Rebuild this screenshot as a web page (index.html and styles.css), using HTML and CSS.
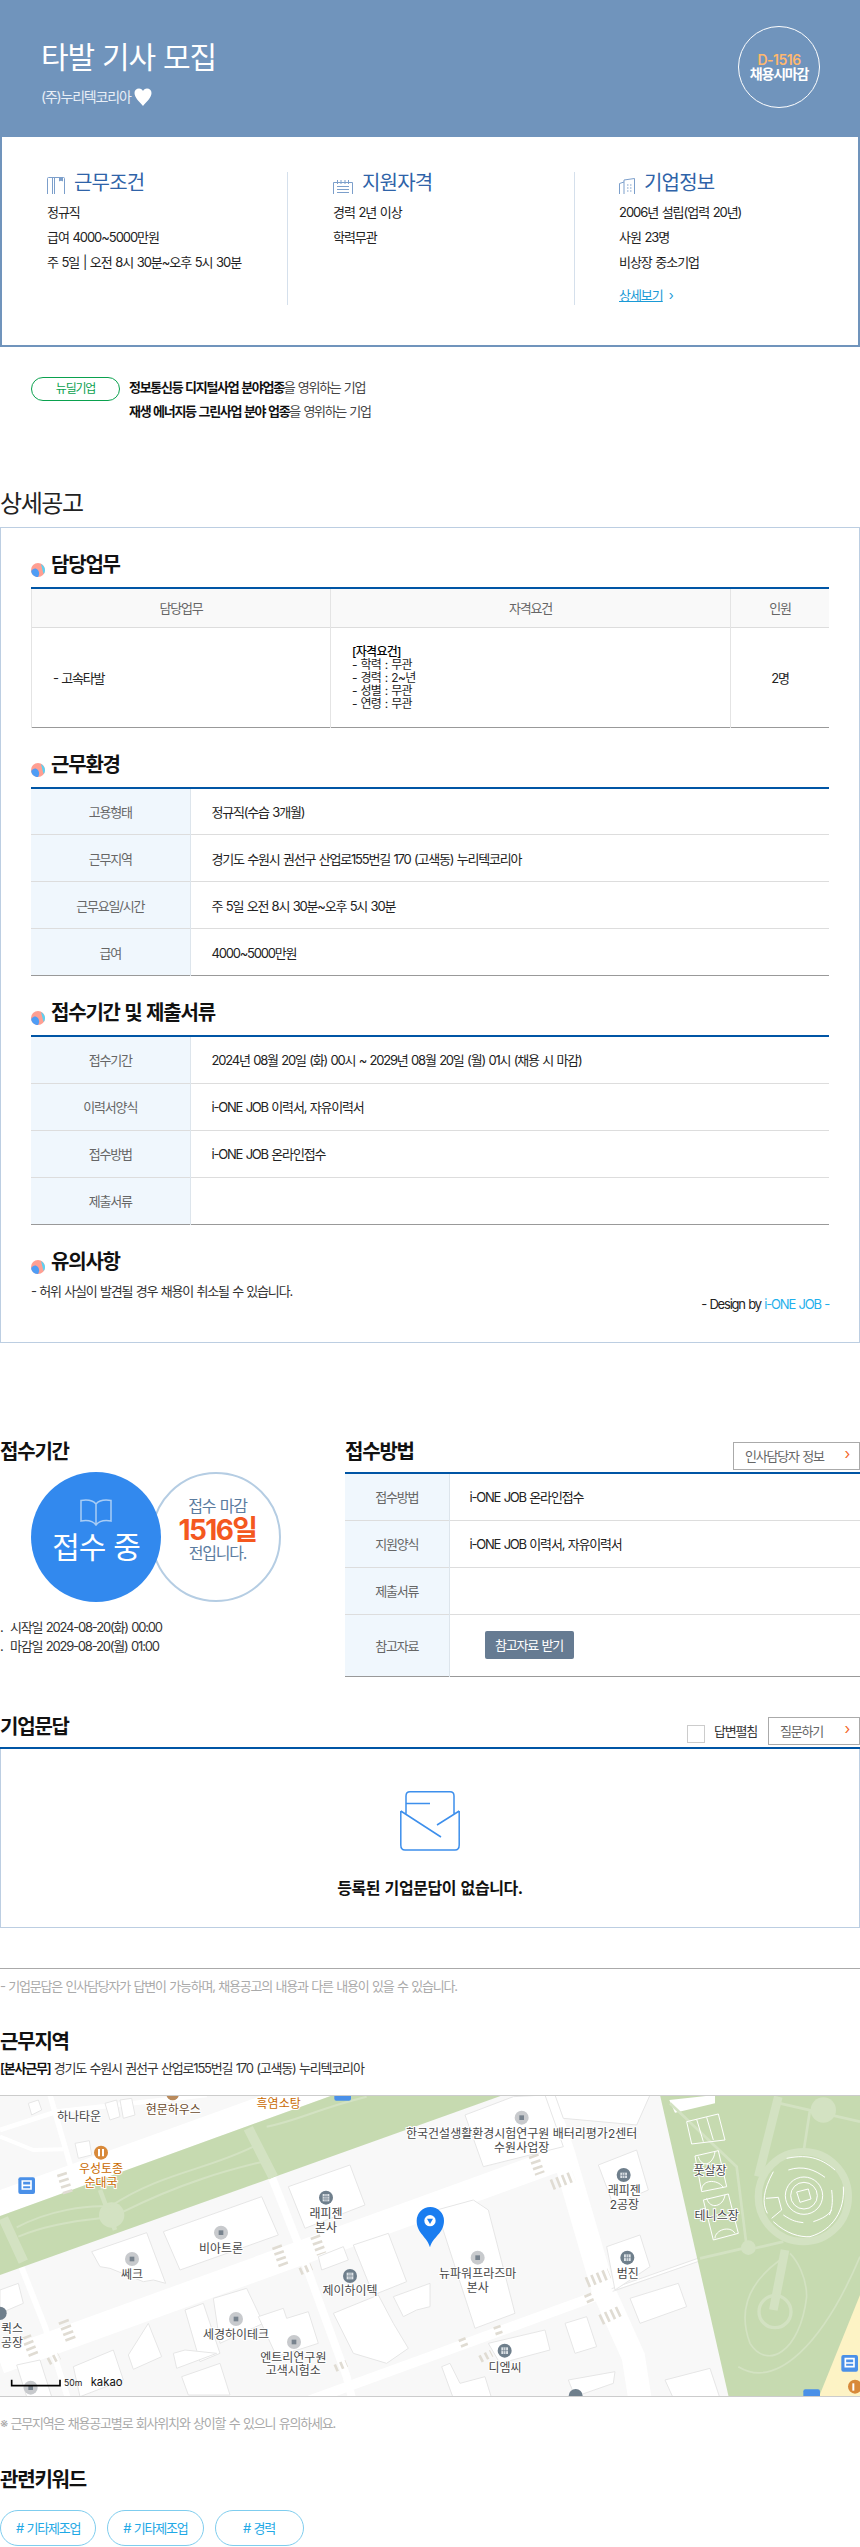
FILE: index.html
```html
<!DOCTYPE html>
<html lang="ko">
<head>
    <meta charset="UTF-8">
    <title>타발 기사 모집</title>
    <link rel="stylesheet" href="styles.css">
</head>
<body>
<svg class="defs" width="0" height="0">
    <symbol id="ball" viewBox="0 0 14 14">
        <circle cx="7" cy="7" r="7" fill="#ff9f92"/>
        <path d="M0.2 8 C2 5 5 4.5 7 7 C8.5 9 8.5 12 7 14 C3 14 0.6 11.5 0.2 8Z" fill="#4f9df5"/>
        <path d="M10 1 C12.5 2.5 14 5 14 7 C14 8.5 13.5 10 12.6 11 C11.5 8 11 4 10 1Z" fill="#58d3f5"/>
    </symbol>
</svg>

<div class="job-top">
    <div>
        <h1 class="job-title">타발 기사 모집</h1>
        <div class="job-company">(주)누리텍코리아
            <svg class="heart" width="18" height="18" viewBox="0 0 18 18"><path d="M9 18 C6 14 0.5 10 0.5 5 C0.5 2 2.5 0.5 5 0.5 C7 0.5 8.3 1.5 9 3 C9.7 1.5 11 0.5 13 0.5 C15.5 0.5 17.5 2 17.5 5 C17.5 10 12 14 9 18Z" fill="#fff"/></svg>
        </div>
    </div>
    <div class="dday">
        <span class="dday-num">D-1516</span>
        <span class="dday-txt">채용시마감</span>
    </div>
</div>

<div class="summary">
    <div class="summary-col">
        <h2>
            <svg width="18" height="17" viewBox="0 0 18 17" class="sum-icon"><path d="M0.5 17V1.5Q0.5 0.5 1.5 0.5H16.5Q17.5 0.5 17.5 1.5V17M5.5 0.5V17M7.5 0.5V17"/><path d="M12.5 0.5V4L14 3L15.5 4V0.5" class="fill"/></svg>
            근무조건
        </h2>
        <p>정규직</p>
        <p>급여 4000~5000만원</p>
        <p>주 5일 | 오전 8시 30분~오후 5시 30분</p>
    </div>
    <div class="summary-col">
        <h2>
            <svg width="20" height="14" viewBox="0 0 20 14" class="sum-icon"><path d="M0.5 14V2.5H19.5V14M4.5 0V4M8 0V4M12 0V4M15.5 0V4M4 6.5H16M4 9.5H16M4 12.5H16"/></svg>
            지원자격
        </h2>
        <p>경력 2년 이상</p>
        <p>학력무관</p>
    </div>
    <div class="summary-col">
        <h2>
            <svg width="16" height="16" viewBox="0 0 16 16" class="sum-icon"><path d="M0.5 16V5.5L5 4V16M5 4V2L15.5 0.5V16M8 7H9.5M11 7H12.5M8 10H9.5M11 10H12.5M8 13H9.5M11 13H12.5"/></svg>
            기업정보
        </h2>
        <p>2006년 설립(업력 20년)</p>
        <p>사원 23명</p>
        <p>비상장 중소기업</p>
        <div class="more"><a href="#">상세보기</a><span>›</span></div>
    </div>
</div>

<div class="newdeal">
    <span class="newdeal-tag">뉴딜기업</span>
    <div>
        <p><b>정보통신등 디지털사업 분야업종</b>을 영위하는 기업</p>
        <p><b>재생 에너지등 그린사업 분야 업종</b>을 영위하는 기업</p>
    </div>
</div>

<h2 class="detail-title">상세공고</h2>
<div class="detail-box">
    <h3 class="sec-title"><svg class="ball"><use href="#ball"/></svg>담당업무</h3>
    <table class="tbl tbl-duty">
        <colgroup><col class="c1"><col class="c2"><col></colgroup>
        <tr class="head"><th>담당업무</th><th>자격요건</th><th>인원</th></tr>
        <tr class="body">
            <td class="left">- 고속타발</td>
            <td class="left qual"><b>[자격요건]</b><br>- 학력 : 무관<br>- 경력 : 2~년<br>- 성별 : 무관<br>- 연령 : 무관</td>
            <td>2명</td>
        </tr>
    </table>

    <h3 class="sec-title"><svg class="ball"><use href="#ball"/></svg>근무환경</h3>
    <table class="tbl tbl-info">
        <tr><th>고용형태</th><td>정규직(수습 3개월)</td></tr>
        <tr><th>근무지역</th><td>경기도 수원시 권선구 산업로155번길 170 (고색동) 누리텍코리아</td></tr>
        <tr><th>근무요일/시간</th><td>주 5일 오전 8시 30분~오후 5시 30분</td></tr>
        <tr><th>급여</th><td>4000~5000만원</td></tr>
    </table>

    <h3 class="sec-title"><svg class="ball"><use href="#ball"/></svg>접수기간 및 제출서류</h3>
    <table class="tbl tbl-info">
        <tr><th>접수기간</th><td>2024년 08월 20일 (화) 00시 ~ 2029년 08월 20일 (월) 01시 (채용 시 마감)</td></tr>
        <tr><th>이력서양식</th><td>i-ONE JOB 이력서, 자유이력서</td></tr>
        <tr><th>접수방법</th><td>i-ONE JOB 온라인접수</td></tr>
        <tr><th>제출서류</th><td></td></tr>
    </table>

    <h3 class="sec-title"><svg class="ball"><use href="#ball"/></svg>유의사항</h3>
    <p class="notice">- 허위 사실이 발견될 경우 채용이 취소될 수 있습니다.</p>
    <p class="design">- Design by <span>i-ONE JOB -</span></p>
</div>

<div class="apply">
    <div>
        <div class="row-head"><h3 class="plain-title">접수기간</h3></div>
        <div class="circles">
            <div class="circle-on">
                <svg width="32" height="27" viewBox="0 0 32 27" class="book"><path d="M16 5 C13 1.5 7 0.5 1 1.5 V22 C7 21 13 22 16 26 C19 22 25 21 31 22 V1.5 C25 0.5 19 1.5 16 5Z M16 5 V26"/></svg>
                <span>접수 중</span>
            </div>
            <div class="circle-off">
                <span>접수 마감</span>
                <strong>1516일</strong>
                <span>전입니다.</span>
            </div>
        </div>
        <ul class="dates">
            <li>시작일 2024-08-20(화) 00:00</li>
            <li>마감일 2029-08-20(월) 01:00</li>
        </ul>
    </div>
    <div>
        <div class="row-head">
            <h3 class="plain-title">접수방법</h3>
            <a class="line-btn hr-btn" href="#">인사담당자 정보<span>›</span></a>
        </div>
        <table class="tbl tbl-apply">
            <tr><th>접수방법</th><td>i-ONE JOB 온라인접수</td></tr>
            <tr><th>지원양식</th><td>i-ONE JOB 이력서, 자유이력서</td></tr>
            <tr><th>제출서류</th><td></td></tr>
            <tr class="tall"><th>참고자료</th><td><a class="file-btn" href="#">참고자료 받기</a></td></tr>
        </table>
    </div>
</div>

<div class="qna-head">
    <h3 class="plain-title">기업문답</h3>
    <div class="qna-tools">
        <label class="check"><i></i>답변펼침</label>
        <a class="line-btn ask-btn" href="#">질문하기<span>›</span></a>
    </div>
</div>
<div class="qna-box">
    <svg width="60" height="60" viewBox="0 0 60 60" class="mail"><path d="M0.8 20 V54 Q0.8 59 5 59 H55 Q59.2 59 59.2 54 V20 M0.8 20 L41 46 M59.2 20 L37 34 M6 24 V5 Q6 0.8 10 0.8 H50 Q54 0.8 54 5 V24 M6 12.5 H30"/></svg>
    <p>등록된 기업문답이 없습니다.</p>
</div>
<p class="qna-note">- 기업문답은 인사담당자가 답변이 가능하며, 채용공고의 내용과 다른 내용이 있을 수 있습니다.</p>

<h3 class="plain-title area-title">근무지역</h3>
<p class="address"><b>[본사근무]</b> 경기도 수원시 권선구 산업로155번길 170 (고색동) 누리텍코리아</p>

<div class="map">
    <svg width="860" height="300" viewBox="0 2096 860 300">
        <rect class="m-base" x="0" y="2090" width="860" height="320"/>
        <g transform="translate(0 2090) scale(0.33333)">
            <!-- roads -->
            <path class="m-white" d="M0 300 L790 15 L1000 15 L0 378Z"/>
            <path class="m-road" stroke-width="72" d="M0 816 L1671 210"/>
            <path class="m-road" stroke-width="70" d="M1630 15 L1690 190 L1810 600 L1900 800 L1925 960"/>
            <path class="m-road" stroke-width="30" d="M850 960 L1290 800 L1810 610"/>
            <path class="m-road" stroke-width="24" d="M815 260 L890 450 L1040 860 L1065 960"/>
            <path class="m-road" stroke-width="18" d="M60 520 L135 710 L215 960"/>
            <path class="m-road" stroke-width="16" d="M150 15 L215 240"/>
            <path class="m-road" stroke-width="12" d="M0 140 L100 180 L190 178"/>
            <path class="m-road" stroke-width="14" d="M0 120 L170 65 L620 15"/>
            <path class="m-road" stroke-width="8" d="M1830 600 L2110 505"/>
            <path class="m-edge" d="M1835 596 L2108 500 M1838 604 L2110 509"/>
            <!-- park band -->
            <path class="m-green" d="M0 378 L1000 15 L1510 15 L0 555Z"/>
            <path class="m-light" stroke-width="30" d="M745 115 L820 262 M10 385 L70 515"/>
            <path class="m-light" stroke-width="14" d="M300 300 L345 420"/>
            <circle class="m-lightfill" cx="335" cy="375" r="38"/>
            <path class="m-light" stroke-width="6" d="M50 412 C150 360 260 345 330 350 C480 250 620 240 760 170 M55 440 C150 400 250 390 300 385 M370 365 C540 280 680 240 810 210 M800 110 C900 90 940 60 1100 20"/>
            <!-- buildings -->
            <g class="m-bld">
                <path d="M865 290 L1050 225 L1095 345 L915 415Z"/>
                <path d="M490 425 L785 320 L835 435 L540 540Z"/>
                <path d="M275 485 L440 428 L497 580 L460 570 L430 575 L330 535 L300 530Z"/>
                <path d="M955 500 L1030 470 L1045 510 L965 540Z"/>
                <path d="M1060 465 L1165 430 L1220 575 L1120 615Z"/>
                <path d="M1000 670 L1135 615 L1180 700 L1225 775 L1160 820 L1060 790Z"/>
                <path d="M1180 620 L1290 580 L1290 650 L1250 660 L1210 680Z"/>
                <path d="M640 625 L740 595 L790 700 L660 760Z"/>
                <path d="M555 660 L610 640 L660 790 L600 815Z"/>
                <path d="M385 795 L445 700 L485 800 L400 838Z"/>
                <path d="M775 680 L850 655 L860 685 L925 665 L955 760 L830 800Z"/>
                <path d="M220 830 L340 780 L370 870 L240 920Z"/>
                <path d="M520 790 L555 780 L650 790 L530 835Z"/>
                <path d="M50 825 L120 810 L155 920 L80 920Z"/>
                <path d="M545 860 L660 820 L690 915 L565 915Z"/>
                <path d="M0 600 L55 580 L70 640 L0 670Z"/>
                <path d="M225 160 L268 152 L275 195 L235 205Z"/>
                <path d="M315 40 L350 30 L360 80 L330 90Z"/>
                <path d="M360 30 L395 25 L405 75 L370 85Z"/>
                <path d="M85 40 L115 30 L125 60 L95 75Z"/>
            </g>
        </g>
        <g transform="translate(430 2090) scale(0.33333)">
            <path class="m-green" d="M690 15 L905 960 L1300 960 L1300 15Z"/>
            <path class="m-white" d="M718 30 L855 15 L855 40 L735 68Z"/>
            <path class="m-yellow" d="M1300 590 L1165 925 L1300 925Z"/>
            <g class="m-bld">
                <path d="M505 225 L620 180 L655 300 L550 345Z"/>
                <path d="M530 470 L630 435 L660 530 L555 600Z"/>
                <path d="M600 625 L745 580 L770 650 L630 700Z"/>
                <path d="M105 75 L250 20 L345 15 L400 170 L160 230Z"/>
                <path d="M375 15 L660 15 L620 105 L400 85Z"/>
                <path d="M20 360 L130 330 L175 360 L255 670 L135 715Z"/>
                <path d="M405 700 L470 680 L500 770 L435 790Z"/>
                <path d="M175 760 L345 720 L360 780 L210 820Z"/>
                <path d="M705 870 L840 835 L870 925 L730 925Z"/>
                <path d="M35 830 L60 820 L90 880 L165 860 L185 925 L70 925Z"/>
                <path d="M415 870 L555 845 L550 880 L435 920Z"/>
            </g>
            <!-- park paths -->
            <path class="m-light" stroke-width="26" d="M1045 20 L985 260 M1065 480 L1030 660"/>
            <path class="m-light" stroke-width="8" d="M1140 60 L1120 190 M720 40 L920 230 L950 470 M950 480 L1060 455 M1050 40 L1290 95 M810 505 L940 475"/>
            <path class="m-light" stroke-width="5" d="M1050 510 C940 590 930 680 960 760 C1010 840 1110 790 1130 620 C1130 560 1100 510 1080 490 M925 830 C1040 900 1180 760 1290 500"/>
            <circle class="m-ring" cx="1120" cy="320" r="135" stroke-width="22"/>
            <circle class="m-ring" cx="1035" cy="665" r="48" stroke-width="10"/>
            <circle class="m-lightfill" cx="1180" cy="60" r="38"/>
            <circle class="m-lightfill" cx="955" cy="473" r="22"/>
            <g class="m-line">
                <path d="M770 95 L865 72 L885 150 L785 162Z M800 88 L820 155 M830 82 L850 150"/>
                <path d="M795 198 L865 182 L890 290 L815 305Z M805 200 C815 235 850 225 855 185 M815 300 C815 270 860 265 880 292"/>
                <path d="M820 330 L895 312 L925 430 L850 450Z M830 325 C840 360 880 350 885 315 M855 445 C855 420 900 405 915 430"/>
                <circle cx="1122" cy="317" r="56"/>
                <circle cx="1122" cy="317" r="40"/>
                <path d="M1100 306 L1135 297 L1143 327 L1110 337Z"/>
                <path d="M1070 205 C1140 190 1180 210 1215 240 M1075 240 C1120 225 1155 240 1185 262 M1030 245 C1000 300 995 340 1012 370 M1205 300 C1210 340 1205 360 1198 375 M1240 290 C1245 360 1210 420 1140 440 C1110 442 1070 432 1030 395 M1008 325 L1045 322 L1055 360 L1025 385 M1060 375 C1090 395 1100 395 1120 398 M1150 395 C1180 385 1195 375 1205 360"/>
            </g>
        </g>
        <g transform="translate(0 2090) scale(0.33333)">
            <!-- crosswalks -->
            <g class="m-cross">
                <path stroke-width="30" d="M185 250 L205 312"/>
                <path stroke-width="32" d="M190 692 L215 756"/>
                <path stroke-width="30" d="M78 738 L102 798"/>
                <path stroke-width="30" d="M830 468 L852 530"/>
                <path stroke-width="30" d="M945 438 L965 492"/>
                <path stroke-width="22" d="M900 545 L935 530"/>
                <path stroke-width="22" d="M145 815 L178 798"/>
                <path stroke-width="22" d="M1005 835 L1040 820"/>
                <path stroke-width="30" d="M1600 195 L1620 252"/>
                <path stroke-width="32" d="M1655 285 L1722 258"/>
                <path stroke-width="32" d="M1760 578 L1828 550"/>
                <path stroke-width="22" d="M1762 612 L1775 642"/>
                <path stroke-width="32" d="M1802 690 L1866 660"/>
                <path stroke-width="22" d="M1490 708 L1500 738"/>
                <path stroke-width="22" d="M1385 745 L1398 778"/>
                <path stroke-width="22" d="M1440 808 L1475 790"/>
            </g>
            <!-- bus -->
            <g class="m-bus">
                <rect x="55" y="262" width="50" height="50" rx="6"/>
                <rect x="1003" y="-18" width="50" height="50" rx="6"/>
                <rect x="2524" y="795" width="50" height="50" rx="6"/>
                <rect x="2410" y="898" width="50" height="50" rx="6"/>
            </g>
            <g class="m-busglyph">
                <path d="M67 273 H93 V297 H67Z M67 286 H93"/>
                <path d="M2536 806 H2562 V830 H2536Z M2536 819 H2562"/>
            </g>
            <!-- poi -->
            <g class="m-dot">
                <circle cx="663" cy="428" r="21"/><circle cx="396" cy="507" r="21"/>
                <circle cx="708" cy="687" r="21"/><circle cx="882" cy="756" r="21"/>
                <circle cx="92" cy="893" r="21"/><circle cx="1565" cy="83" r="21"/>
                <circle cx="1433" cy="503" r="21"/>
            </g>
            <g class="m-dotin">
                <rect x="656" y="421" width="14" height="14"/><rect x="389" y="500" width="14" height="14"/>
                <rect x="701" y="680" width="14" height="14"/><rect x="875" y="749" width="14" height="14"/>
                <rect x="85" y="886" width="14" height="14"/><rect x="1558" y="76" width="14" height="14"/>
                <rect x="1426" y="496" width="14" height="14"/>
            </g>
            <g class="m-dark">
                <circle cx="978" cy="323" r="21"/><circle cx="1050" cy="558" r="21"/>
                <circle cx="1871" cy="255" r="21"/><circle cx="1882" cy="503" r="21"/>
                <circle cx="1514" cy="782" r="21"/><circle cx="1727" cy="918" r="21"/>
                <circle cx="0" cy="670" r="20"/>
            </g>
            <g class="m-darkin">
                <rect x="968" y="312" width="20" height="22"/><rect x="1040" y="548" width="20" height="20"/>
                <rect x="1861" y="248" width="20" height="16"/><rect x="1872" y="493" width="20" height="20"/>
                <rect x="1504" y="772" width="20" height="20"/>
            </g>
            <path class="m-grid" d="M975 312 V334 M981 312 V334 M968 320 H988 M968 327 H988 M1047 548 V568 M1053 548 V568 M1040 558 H1060 M1868 248 V264 M1874 248 V264 M1861 256 H1881 M1879 493 V513 M1885 493 V513 M1872 503 H1892 M1511 772 V792 M1517 772 V792 M1504 782 H1524"/>
            <circle class="m-food" cx="303" cy="188" r="21"/>
            <path class="m-fork" d="M297 177 V199 M309 177 V199"/>
            <circle class="m-food" cx="2565" cy="890" r="21"/>
            <path class="m-fork" d="M2560 880 V902"/>
            <circle class="m-brown" cx="518" cy="12" r="19"/>
            <!-- labels -->
            <g class="m-label">
                <text x="237" y="93">하나타운</text>
                <text x="978" y="385">래피젠</text><text x="978" y="425">본사</text>
                <text x="663" y="490">비아트론</text>
                <text x="396" y="566">쎄크</text>
                <text x="1050" y="615">제이하이텍</text>
                <text x="708" y="748">세경하이테크</text>
                <text x="880" y="816">엔트리연구원</text><text x="880" y="856">고색시험소</text>
                <text x="36" y="728">퀵스</text><text x="36" y="770">공장</text>
                <text x="1565" y="145">한국건설생활환경시험연구원 배터리평가2센터</text>
                <text x="1565" y="185">수원사업장</text>
                <text x="1433" y="565">뉴파워프라즈마</text><text x="1433" y="605">본사</text>
                <text x="1873" y="315">래피젠</text><text x="1873" y="356">2공장</text>
                <text x="1883" y="565">범진</text>
                <text x="1515" y="845">디엠씨</text>
                <text x="2130" y="256">풋살장</text>
                <text x="2150" y="391">테니스장</text>
            </g>
            <text class="m-label m-brownlabel" x="520" y="73">현문하우스</text>
            <g class="m-label m-orange">
                <text x="836" y="55">흑염소탕</text>
                <text x="303" y="250">우성토종</text><text x="303" y="290">순대국</text>
            </g>
            <!-- scale -->
            <path class="m-scale" d="M35 869 V887 H180 V869"/>
            <text class="m-50" x="192" y="889">50m</text>
            <text class="m-kakao" x="272" y="889">kakao</text>
            <!-- pin -->
            <path class="m-pin" d="M1290 472 C1282 440 1250 430 1250 392 A41 41 0 1 1 1332 392 C1332 430 1298 440 1290 472Z"/>
            <circle cx="1290" cy="392" r="17" fill="#fff"/>
            <path class="m-pin" d="M1281 386 H1299 L1290 402Z"/>
        </g>
    </svg>
</div>
<p class="map-note">※ 근무지역은 채용공고별로 회사위치와 상이할 수 있으니 유의하세요.</p>

<h3 class="plain-title keyword-title">관련키워드</h3>
<div class="keywords">
    <a href="#"># 기타제조업</a>
    <a href="#"># 기타제조업</a>
    <a href="#"># 경력</a>
</div>
</body>
</html>
```

FILE: styles.css
```css
* {
    margin: 0;
    padding: 0;
    box-sizing: border-box;
}
html, body {
    background: #fff;
}
body {
    width: 860px;
    font-family: Inter, "Noto Sans CJK KR", sans-serif;
    font-size: 13px;
    color: #222;
    letter-spacing: -1.2px;
    word-spacing: 1px;
    padding-bottom: 1px;
}
a {
    text-decoration: none;
    color: inherit;
}
.defs {
    position: absolute;
}

/* top */
.job-top {
    height: 137px;
    background: #7094bc;
    padding: 26px 40px 0 41px;
    display: flex;
    justify-content: space-between;
    align-items: flex-start;
    color: #fff;
}
.job-title {
    font-size: 30px;
    font-weight: 400;
    line-height: 40px;
    margin-top: 11px;
}
.job-company {
    margin-top: 11px;
    font-size: 14px;
    line-height: 18px;
    color: #e8eef6;
    display: flex;
    align-items: center;
    gap: 3px;
}
.dday {
    width: 82px;
    height: 82px;
    border: 1px solid #fff;
    border-radius: 50%;
    display: flex;
    flex-direction: column;
    align-items: center;
    justify-content: center;
    font-size: 14px;
    font-weight: 600;
    line-height: 14px;
}
.dday-num {
    color: #ffb86e;
    letter-spacing: -0.5px;
}

/* summary */
.summary {
    height: 210px;
    padding-top: 35px;
    border: 2px solid #7094bc;
    border-top: 0;
    display: grid;
    grid-template-columns: 286px 287px 1fr;
    align-items: start;
}
.summary-col {
    height: 133px;
    padding-left: 45px;
    border-right: 1px solid #d5e0ec;
    letter-spacing: -1.05px;
}
.summary-col:last-child {
    border-right: 0;
    padding-left: 44px;
}
.summary-col h2 {
    font-size: 20px;
    font-weight: 400;
    line-height: 22px;
    color: #2f63a8;
    display: flex;
    align-items: flex-end;
    gap: 9px;
    margin-bottom: 6px;
    letter-spacing: -0.8px;
}
.sum-icon {
    fill: none;
    stroke: #7c9fcb;
    stroke-width: 1;
}
.sum-icon .fill {
    fill: #7c9fcb;
}
.summary-col p {
    line-height: 25px;
}
.more {
    margin-top: 12px;
    line-height: 16px;
    color: #1a9ad6;
    display: flex;
    gap: 6px;
}
.more a {
    text-decoration: underline;
}

/* newdeal */
.newdeal {
    margin-top: 28px;
    padding-left: 31px;
    display: flex;
    gap: 9px;
    align-items: flex-start;
}
.newdeal-tag {
    width: 89px;
    height: 24px;
    margin-top: 2px;
    border: 1px solid #0aa14e;
    border-radius: 12px;
    color: #0aa14e;
    font-size: 12px;
    line-height: 22px;
    text-align: center;
}
.newdeal p {
    line-height: 24px;
    color: #444;
    letter-spacing: -1.3px;
}
.newdeal b {
    color: #111;
    font-weight: 700;
}

/* detail */
.detail-title {
    margin-top: 66px;
    margin-bottom: 8px;
    font-size: 24px;
    font-weight: 400;
    line-height: 30px;
    color: #222;
    letter-spacing: -1.4px;
}
.detail-box {
    height: 816px;
    border: 1px solid #bccee2;
    padding: 23px 30px 0;
}
.sec-title {
    display: flex;
    gap: 6px;
    font-size: 20px;
    font-weight: 700;
    line-height: 28px;
    color: #111;
    margin-top: 23px;
    margin-bottom: 8px;
    letter-spacing: -1.2px;
}
.sec-title:first-child {
    margin-top: 0;
}
.ball {
    width: 14px;
    height: 14px;
    align-self: flex-end;
    margin-bottom: 2px;
}

/* tables */
.tbl {
    width: 100%;
    table-layout: fixed;
    border-collapse: collapse;
    border-top: 2px solid #0055a5;
    border-bottom: 1px solid #999;
}
.tbl th {
    font-weight: 400;
    color: #666;
    text-align: center;
}
.tbl td {
    color: #222;
}
.tbl tr {
    height: 47px;
    border-bottom: 1px solid #ddd;
}
.tbl tr:last-child {
    border-bottom: 0;
}
.tbl-duty .c1 {
    width: 299px;
}
.tbl-duty .c2 {
    width: 400px;
}
.tbl-duty th {
    background: #f9f9f9;
    border-left: 1px solid #e4e4e4;
}
.tbl-duty td {
    text-align: center;
    border-left: 1px solid #e4e4e4;
}
.tbl-duty tr.head {
    height: 39px;
}
.tbl-duty tr.body {
    height: 100px;
}
.tbl-duty td.left {
    text-align: left;
    padding-left: 21px;
}
.tbl-duty td.qual {
    font-size: 12px;
    line-height: 13px;
    letter-spacing: -0.7px;
}
.tbl-duty td.qual b {
    font-weight: 500;
    color: #000;
}
.tbl-info th {
    width: 159px;
    background: #f0f7fd;
    border-right: 1px solid #dde5ec;
}
.tbl-info td {
    padding-left: 21px;
}
.notice {
    line-height: 14px;
    color: #333;
}
.design {
    line-height: 12px;
    text-align: right;
    color: #222;
}
.design span {
    color: #1fb0ec;
}

/* apply */
.apply {
    margin-top: 95px;
    display: grid;
    grid-template-columns: 345px 515px;
}
.row-head {
    height: 34px;
    display: flex;
    justify-content: space-between;
    align-items: flex-start;
}
.plain-title {
    font-size: 20px;
    font-weight: 700;
    line-height: 28px;
    color: #111;
    letter-spacing: -1.2px;
}
.line-btn {
    height: 28px;
    border: 1px solid #aaa;
    color: #666;
    line-height: 26px;
    display: flex;
    justify-content: space-between;
    padding: 0 10px 0 11px;
}
.line-btn span {
    color: #f4682a;
    font-size: 15px;
    line-height: 22px;
}
.hr-btn {
    width: 127px;
    margin-top: 4px;
}
.circles {
    display: flex;
    padding-left: 31px;
}
.circle-on {
    position: relative;
    z-index: 1;
    width: 130px;
    height: 130px;
    border-radius: 50%;
    background: #3289ee;
    color: #fff;
    display: flex;
    flex-direction: column;
    align-items: center;
    padding-top: 27px;
    font-size: 30px;
    line-height: 36px;
}
.book {
    fill: none;
    stroke: #a9cdf5;
    stroke-width: 1.5;
    margin-bottom: 3px;
}
.circle-off {
    width: 130px;
    height: 130px;
    margin-left: -10px;
    padding: 0 0 14px 3px;
    border: 2px solid #b5cde3;
    border-radius: 50%;
    display: flex;
    flex-direction: column;
    align-items: center;
    justify-content: center;
    color: #5b7c9f;
    font-size: 16px;
    line-height: 23px;
}
.circle-off strong {
    font-size: 28px;
    line-height: 24px;
    font-weight: 700;
    color: #f4581f;
    letter-spacing: -1.6px;
}
.dates {
    list-style: none;
    margin-top: 16px;
    padding-left: 10px;
    line-height: 19px;
    color: #333;
    position: relative;
}
.dates li::before {
    content: ".";
    position: absolute;
    left: 0;
}
.tbl-apply th {
    width: 104px;
    background: #f0f7fd;
    border-right: 1px solid #dde5ec;
}
.tbl-apply td {
    padding-left: 20px;
}
.tbl-apply tr.tall {
    height: 62px;
}
.file-btn {
    display: block;
    width: 89px;
    height: 28px;
    margin-left: 15px;
    background: #667b92;
    border-radius: 2px;
    color: #fff;
    line-height: 28px;
    text-align: center;
}

/* qna */
.qna-head {
    margin-top: 36px;
    height: 36px;
    display: flex;
    justify-content: space-between;
    border-bottom: 2px solid #0055a5;
}
.qna-tools {
    display: flex;
    margin-top: 4px;
    gap: 11px;
}
.check {
    display: flex;
    align-items: center;
    gap: 9px;
    height: 28px;
    color: #333;
}
.check i {
    width: 18px;
    height: 18px;
    margin-top: 6px;
    border: 1px solid #ccc;
}
.ask-btn {
    width: 92px;
}
.qna-box {
    height: 179px;
    border: 1px solid #bccee2;
    border-top: 0;
    padding-top: 42px;
    text-align: center;
}
.mail {
    display: block;
    margin: 0 auto 25px;
    fill: none;
    stroke: #3d8fec;
    stroke-width: 1.5;
}
.qna-box p {
    font-size: 16px;
    font-weight: 700;
    line-height: 24px;
    color: #111;
    letter-spacing: -0.4px;
}
.qna-note {
    margin-top: 40px;
    border-top: 1px solid #aaa;
    padding-top: 9px;
    line-height: 16px;
    color: #aaa;
}
.area-title {
    margin-top: 34px;
}
.address {
    margin-top: 4px;
    line-height: 16px;
    color: #333;
}
.address b {
    font-weight: 600;
    color: #111;
}

/* map */
.map {
    margin-top: 19px;
    height: 302px;
    border: solid #ccc;
    border-width: 1px 0;
    overflow: hidden;
}
.map svg {
    display: block;
}
.m-base { fill: #f8f8f8; }
.m-white { fill: #fff; }
.m-road { fill: none; stroke: #fff; }
.m-edge { fill: none; stroke: #ddd; stroke-width: 2; }
.m-green { fill: #c6dab0; }
.m-yellow { fill: #fdf3c5; }
.m-light { fill: none; stroke: #d3e2c2; }
.m-lightfill { fill: #d3e2c2; }
.m-ring { fill: none; stroke: #d3e2c2; }
.m-line { fill: none; stroke: #fff; stroke-width: 3; }
.m-bld path { fill: #fff; stroke: #e6e6e6; stroke-width: 3; }
.m-cross path { fill: none; stroke: #e0dcd3; stroke-dasharray: 8 10; }
.m-bus rect { fill: #4a90e8; }
.m-busglyph path { fill: none; stroke: #fff; stroke-width: 5; }
.m-dot circle { fill: #c8cacd; }
.m-dotin rect { fill: #78838e; }
.m-dark circle { fill: #6f7f8c; }
.m-darkin rect { fill: #dfe4e8; }
.m-grid { fill: none; stroke: #6f7f8c; stroke-width: 2; }
.m-food { fill: #d8893a; }
.m-brown { fill: #b98a5c; }
.m-fork { fill: none; stroke: #fff; stroke-width: 6; }
.m-label text, .m-label.m-brownlabel {
    font-size: 36px;
    letter-spacing: 0;
    word-spacing: 0;
    text-anchor: middle;
    fill: #474747;
    stroke: #fff;
    stroke-width: 6px;
    paint-order: stroke;
}
.m-label.m-brownlabel { fill: #6a4b2d; }
.m-orange text { fill: #c96a00; }
.m-scale { fill: none; stroke: #000; stroke-width: 5; }
.m-50 { font-size: 26px; letter-spacing: 0; fill: #222; }
.m-kakao { font-size: 34px; letter-spacing: 0; fill: #111; }
.m-pin { fill: #1a7df0; }

.map-note {
    margin-top: 18px;
    line-height: 16px;
    color: #aaa;
}
.keyword-title {
    margin-top: 35px;
}
.keywords {
    margin-top: 16px;
    display: flex;
    gap: 11px;
}
.keywords a {
    min-width: 89px;
    height: 36px;
    padding: 0 15px;
    border: 1px solid #7fcdee;
    border-radius: 18px;
    color: #1fa9e6;
    line-height: 34px;
    text-align: center;
}
```
